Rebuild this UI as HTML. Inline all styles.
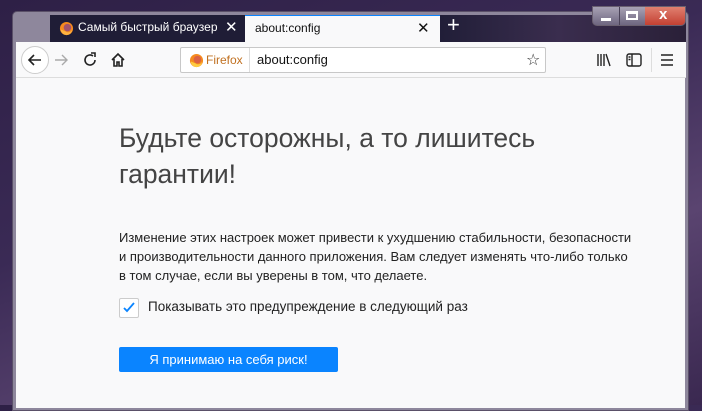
<!DOCTYPE html>
<html><head><meta charset="utf-8"><style>
*{margin:0;padding:0;box-sizing:border-box}
body{width:702px;height:405px;overflow:hidden;position:relative;font-family:"Segoe UI","Liberation Sans","DejaVu Sans",sans-serif;background:linear-gradient(160deg,#2e2046 0%,#3a2a55 40%,#5a4470 70%,#3a2850 100%)}
.win{position:absolute;left:12px;top:11px;width:677px;height:400px;background:#8e879c;border:1px solid #5a5068;border-radius:5px 5px 0 0}
.tabs{position:absolute;left:50px;top:15px;width:636px;height:27px;background:linear-gradient(90deg,#1f1d36 0%,#1f1d36 60%,#3a2d4e 80%,#2a2038 100%)}
.tab1{position:absolute;left:0;top:0;width:195px;height:27px;color:#fff;font-size:12px}
.tab2{position:absolute;left:195px;top:0;width:195px;height:27px;background:#f9f9fa;color:#111;font-size:12px;border-top:1px solid #0a84ff}
.tb{position:absolute;left:16px;top:42px;width:670px;height:36px;background:#f9f9fa;border-bottom:1px solid #ddd}
.content{position:absolute;left:16px;top:78px;width:669px;height:330px;background:#f9f9fa}
.t{position:absolute;white-space:nowrap}
</style></head><body>
<div class="win"></div>
<div class="tabs">
 <div class="tab1">
  <svg style="position:absolute;left:9px;top:6px" width="15" height="15" viewBox="0 0 16 16"><circle cx="8" cy="8" r="7" fill="#f58a1f"/><circle cx="9" cy="7" r="4" fill="#6b2fa0" opacity=".6"/><path d="M2 9a6 6 0 0 0 12 0c-1 3-5 4-7 2" fill="#ffb340"/></svg>
  <div class="t" style="left:28px;top:5px;width:140px;overflow:hidden">Самый быстрый браузер Mozilla</div>
  <div class="t" style="left:175px;top:3px;font-size:15px">✕</div>
 </div>
 <div class="tab2">
  <div class="t" style="left:10px;top:5px">about:config</div>
  <div class="t" style="left:172px;top:3px;font-size:15px">✕</div>
 </div>
 <div class="t" style="left:397px;top:-3px;color:#fff;font-size:22px;font-weight:300">+</div>
</div>
<div style="position:absolute;left:592px;top:6px;width:94px;height:20px;border:1px solid #6a6070;border-radius:0 0 5px 5px;background:linear-gradient(#a8a2b4,#6e6680);overflow:hidden;z-index:5">
 <div style="position:absolute;left:26px;top:0;width:1px;height:20px;background:#4a4258"></div>
 <div style="position:absolute;left:52px;top:0;width:42px;height:20px;background:linear-gradient(#e08070,#c0392b)"></div>
 <div style="position:absolute;left:8px;top:11px;width:10px;height:3px;background:#fff"></div>
 <div style="position:absolute;left:33px;top:4px;width:12px;height:9px;border:2px solid #fff;border-top-width:3px"></div>
 <div class="t" style="left:66px;top:-1px;color:#fff;font-weight:bold;font-size:15px">x</div>
</div>
<div class="tb">
 <div style="position:absolute;left:5px;top:4px;width:28px;height:28px;border:1px solid #ccc;border-radius:50%;background:#fff"></div>
 <svg style="position:absolute;left:10px;top:9px" width="18" height="18" viewBox="0 0 18 18"><path d="M15 9H3M8 4L3 9l5 5" fill="none" stroke="#222" stroke-width="1.6"/></svg>
 <svg style="position:absolute;left:38px;top:11px" width="15" height="14" viewBox="0 0 15 14"><path d="M1 7h12M8 2l5 5-5 5" fill="none" stroke="#aaa" stroke-width="1.4"/></svg>
 <svg style="position:absolute;left:66px;top:10px" width="16" height="16" viewBox="0 0 16 16"><path d="M13 8a5 5 0 1 1-2-4" fill="none" stroke="#222" stroke-width="1.6"/><path d="M9 1h4v4" fill="none" stroke="#222" stroke-width="1.6"/></svg>
 <svg style="position:absolute;left:94px;top:10px" width="16" height="16" viewBox="0 0 16 16"><path d="M2 8L8 2l6 6M4 7v7h3v-4h2v4h3V7" fill="none" stroke="#222" stroke-width="1.6"/></svg>
 <div style="position:absolute;left:164px;top:5px;width:366px;height:26px;background:#fff;border:1px solid #c8c8c8;border-radius:2px">
  <svg style="position:absolute;left:8px;top:5px" width="15" height="15" viewBox="0 0 16 16"><circle cx="8" cy="8" r="7" fill="#f58a1f"/><circle cx="9" cy="7" r="4" fill="#c13a6a" opacity=".5"/><path d="M2 9a6 6 0 0 0 12 0c-1 3-5 4-7 2" fill="#ffcc40"/></svg>
  <div class="t" style="left:25px;top:5px;font-size:12px;color:#c07020">Firefox</div>
  <div style="position:absolute;left:68px;top:0;width:1px;height:24px;background:#ddd"></div>
  <div class="t" style="left:76px;top:4px;font-size:13px;color:#111">about:config</div>
  <div class="t" style="left:345px;top:2px;font-size:16px;color:#333">☆</div>
 </div>
 <svg style="position:absolute;left:580px;top:11px" width="16" height="14" viewBox="0 0 16 14"><path d="M2 1v12M5 1v12M8 1v12M10 1l4 12" stroke="#222" stroke-width="1.4" fill="none"/></svg>
 <svg style="position:absolute;left:610px;top:11px" width="16" height="14" viewBox="0 0 16 14"><rect x="1" y="1" width="14" height="12" rx="2" fill="none" stroke="#222" stroke-width="1.4"/><path d="M6 1v12M2.5 4h2M2.5 6.5h2" stroke="#222" stroke-width="1.4"/></svg>
 <div style="position:absolute;left:635px;top:6px;width:1px;height:24px;background:#ddd"></div>
 <svg style="position:absolute;left:644px;top:11px" width="14" height="14" viewBox="0 0 14 14"><path d="M1 2h12M1 7h12M1 12h12" stroke="#222" stroke-width="1.5"/></svg>
</div>
<div class="content">
 <div class="t" style="left:103px;top:42px;font-size:26.5px;font-weight:300;color:#444;line-height:36px">Будьте осторожны, а то лишитесь<br>гарантии!</div>
 <div class="t" style="left:103px;top:150px;font-size:13px;color:#222;line-height:19px">Изменение этих настроек может привести к ухудшению стабильности, безопасности<br>и производительности данного приложения. Вам следует изменять что-либо только<br>в том случае, если вы уверены в том, что делаете.</div>
 <div style="position:absolute;left:103px;top:220px;width:20px;height:20px;border:1px solid #ccc;border-radius:2px;background:#fff"></div>
 <svg style="position:absolute;left:106px;top:223px" width="14" height="14" viewBox="0 0 14 14"><path d="M2 7l3 3 7-8" fill="none" stroke="#0a84ff" stroke-width="1.8"/></svg>
 <div class="t" style="left:132px;top:221px;font-size:13.5px;color:#222">Показывать это предупреждение в следующий раз</div>
 <div style="position:absolute;left:103px;top:269px;width:219px;height:25px;background:#0a84ff;border-radius:2px;color:#fff;font-size:13px;text-align:center;line-height:25px">Я принимаю на себя риск!</div>
</div>
</body></html>
